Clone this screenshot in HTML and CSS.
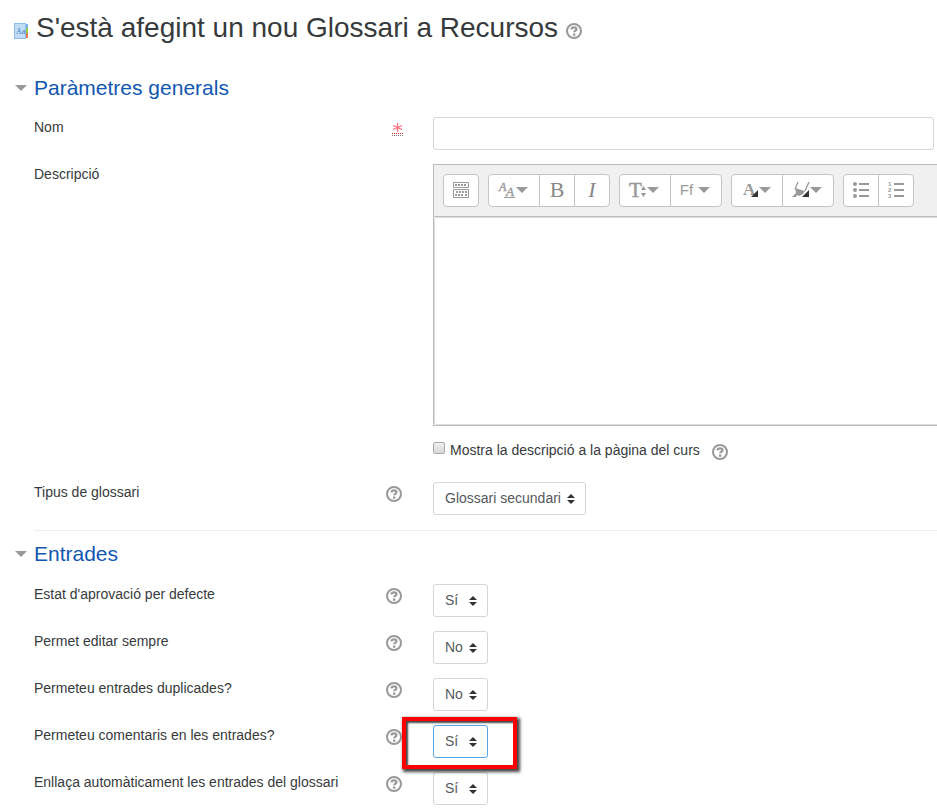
FILE: index.html
```
<!DOCTYPE html>
<html lang="ca">
<head>
    <meta charset="UTF-8">
    <meta name="viewport" content="width=device-width, initial-scale=1.0">
    <title>S'està afegint un nou Glossari a Recursos</title>
    <link rel="stylesheet" href="styles.css">
</head>
<body>
    <!-- Shared icons -->
    <svg class="sprite" aria-hidden="true">
        <symbol id="help" viewBox="0 0 16 16">
            <circle cx="8" cy="8" r="7" fill="none" stroke="#999" stroke-width="2"/>
            <path d="M5.4 6.3C5.6 4.8 6.7 4.3 8 4.3c1.5 0 2.5.7 2.5 1.9 0 1.6-2.3 1.5-2.3 3.1" fill="none" stroke="#999" stroke-width="2.2"/>
            <rect x="7" y="10.5" width="2.4" height="2.3" fill="#999"/>
        </symbol>
        <symbol id="caret" viewBox="0 0 12 6">
            <path d="M0 0h12L6 6z" fill="#999"/>
        </symbol>
    </svg>

    <div class="page">
        <h1 class="title">
            <svg class="title-icon" viewBox="0 0 15 16" aria-hidden="true">
                <rect x="11" y="1" width="3" height="4" fill="#7db4ec"/>
                <rect x="11" y="5" width="3" height="5" fill="#9acb3c"/>
                <rect x="11" y="10" width="3" height="5" fill="#ee7a4b"/>
                <rect x="0.5" y="0.5" width="11" height="15" fill="#c3ddf7" stroke="#8ebbe9"/>
                <text x="2" y="11" font-family="Liberation Serif, serif" font-size="8" fill="#3f7fc9">Aa</text>
            </svg>
            <span>S'està afegint un nou Glossari a Recursos</span>
            <a class="help" href="#" aria-label="Ajuda"><svg><use href="#help"/></svg></a>
        </h1>

        <form>
            <!-- General settings -->
            <section class="section">
                <h2 class="section-title"><a href="#"><svg class="caret"><use href="#caret"/></svg>Paràmetres generals</a></h2>

                <div class="row">
                    <label for="name">Nom</label>
                    <abbr class="required" title="Necessari">
                        <svg viewBox="0 0 11 9"><path d="M5.5 0v9M1 2.5l9 4M10 2.5l-9 4" fill="none" stroke="#ff6b78" stroke-width="1.2"/></svg>
                    </abbr>
                    <div class="field"><input class="text" type="text" id="name"></div>
                </div>

                <div class="row">
                    <label for="description">Descripció</label>
                    <div class="field">
                        <div class="editor">
                            <div class="toolbar">
                                <div class="group">
                                    <button type="button" aria-label="Mostra més botons">
                                        <svg width="16" height="16" viewBox="0 0 16 16">
                                            <g fill="none" stroke="#999">
                                                <path d="M.5.5h15v5H.5zM.5 7.5h15v8H.5z"/>
                                                <path d="M2 3h12M3 10h11M2 13h2M5 13h6M12 13h2" stroke-width="2" stroke-dasharray="2 1"/>
                                            </g>
                                        </svg>
                                    </button>
                                </div>
                                <div class="group">
                                    <button class="wide" type="button" aria-label="Estils de paràgraf">
                                        <svg width="18" height="20" viewBox="0 0 18 20">
                                            <g font-family="Liberation Serif, serif" font-style="italic" fill="#999" stroke="#999" stroke-width=".4">
                                                <text x="1" y="11" font-size="12">A</text>
                                                <text x="8" y="16" font-size="13">A</text>
                                            </g>
                                            <path d="M6 17.5h11" stroke="#999"/>
                                        </svg>
                                        <svg class="caret"><use href="#caret"/></svg>
                                    </button>
                                    <button class="bold" type="button" aria-label="Negreta">B</button>
                                    <button class="italic" type="button" aria-label="Cursiva">I</button>
                                </div>
                                <div class="group">
                                    <button class="wide" type="button" aria-label="Mida de la lletra">
                                        <svg width="18" height="20" viewBox="0 0 18 20">
                                            <text x="0" y="17" font-family="Liberation Serif, serif" font-size="21" fill="#999" stroke="#999" stroke-width=".5">T</text>
                                            <path d="M12 10l2.5-4 2.5 4zM12 13h5l-2.5 4z" fill="#999"/>
                                        </svg>
                                        <svg class="caret"><use href="#caret"/></svg>
                                    </button>
                                    <button class="wide font" type="button" aria-label="Tipus de lletra">Ff<svg class="caret"><use href="#caret"/></svg></button>
                                </div>
                                <div class="group">
                                    <button class="wide" type="button" aria-label="Color del text">
                                        <svg width="18" height="18" viewBox="0 0 18 18">
                                            <text x="2" y="14" font-family="Liberation Serif, serif" font-weight="bold" font-size="17" fill="#999">A</text>
                                            <path d="M17 9v7h-7z" fill="#333"/>
                                        </svg>
                                        <svg class="caret"><use href="#caret"/></svg>
                                    </button>
                                    <button class="wide" type="button" aria-label="Color de fons">
                                        <svg width="18" height="18" viewBox="0 0 18 18">
                                            <path d="M6 1L3 8M17 1l-4 9" fill="none" stroke="#999" stroke-width="1.3"/>
                                            <path d="M3 7l10 3-2 3-4 2-2-1-1 2H0l4-4z" fill="#999"/>
                                            <path d="M17 9v7h-7z" fill="#333"/>
                                        </svg>
                                        <svg class="caret"><use href="#caret"/></svg>
                                    </button>
                                </div>
                                <div class="group">
                                    <button type="button" aria-label="Llista no ordenada">
                                        <svg width="16" height="16" viewBox="0 0 16 16" fill="#999">
                                            <circle cx="2" cy="2" r="2"/><circle cx="2" cy="8" r="2"/><circle cx="2" cy="14" r="2"/>
                                            <path d="M6 1h10v2H6zM6 7h10v2H6zM6 13h10v2H6z"/>
                                        </svg>
                                    </button>
                                    <button type="button" aria-label="Llista ordenada">
                                        <svg width="16" height="16" viewBox="0 0 16 16" fill="#999">
                                            <g font-family="Liberation Sans, sans-serif" font-size="6" font-weight="bold">
                                                <text x="0" y="4">1</text><text x="0" y="10">2</text><text x="0" y="16">3</text>
                                            </g>
                                            <path d="M6 1h10v2H6zM6 7h10v2H6zM6 13h10v2H6z"/>
                                        </svg>
                                    </button>
                                </div>
                            </div>
                            <textarea class="content" id="description"></textarea>
                        </div>
                    </div>
                </div>

                <div class="row">
                    <div class="field check">
                        <input type="checkbox" id="show">
                        <label for="show">Mostra la descripció a la pàgina del curs</label>
                        <a class="help" href="#" aria-label="Ajuda"><svg><use href="#help"/></svg></a>
                    </div>
                </div>

                <div class="row">
                    <label for="type">Tipus de glossari</label>
                    <a class="help" href="#" aria-label="Ajuda"><svg><use href="#help"/></svg></a>
                    <div class="field">
                        <select id="type">
                            <option>Glossari secundari</option>
                            <option>Glossari principal</option>
                        </select>
                    </div>
                </div>
            </section>

            <!-- Entries -->
            <section class="section entries">
                <h2 class="section-title"><a href="#"><svg class="caret"><use href="#caret"/></svg>Entrades</a></h2>

                <div class="row">
                    <label for="approval">Estat d'aprovació per defecte</label>
                    <a class="help" href="#" aria-label="Ajuda"><svg><use href="#help"/></svg></a>
                    <div class="field">
                        <select id="approval"><option>No</option><option selected>Sí</option></select>
                    </div>
                </div>

                <div class="row">
                    <label for="edit">Permet editar sempre</label>
                    <a class="help" href="#" aria-label="Ajuda"><svg><use href="#help"/></svg></a>
                    <div class="field">
                        <select id="edit"><option selected>No</option><option>Sí</option></select>
                    </div>
                </div>

                <div class="row">
                    <label for="duplicates">Permeteu entrades duplicades?</label>
                    <a class="help" href="#" aria-label="Ajuda"><svg><use href="#help"/></svg></a>
                    <div class="field">
                        <select id="duplicates"><option selected>No</option><option>Sí</option></select>
                    </div>
                </div>

                <div class="row">
                    <label for="comments">Permeteu comentaris en les entrades?</label>
                    <a class="help" href="#" aria-label="Ajuda"><svg><use href="#help"/></svg></a>
                    <div class="field">
                        <div class="marked">
                            <select class="active" id="comments"><option>No</option><option selected>Sí</option></select>
                        </div>
                    </div>
                </div>

                <div class="row">
                    <label for="autolink">Enllaça automàticament les entrades del glossari</label>
                    <a class="help" href="#" aria-label="Ajuda"><svg><use href="#help"/></svg></a>
                    <div class="field">
                        <select id="autolink"><option>No</option><option selected>Sí</option></select>
                    </div>
                </div>
            </section>
        </form>
    </div>
</body>
</html>
```
FILE: styles.css
```
* {
    box-sizing: border-box;
}

body {
    margin: 0;
    background: #fff;
    color: #373a3c;
    font-family: "Liberation Sans", Arial, sans-serif;
    font-size: 14px;
    line-height: 20px;
    overflow-x: hidden;
}

.sprite {
    display: none;
}

svg {
    display: block;
    flex: none;
    overflow: visible;
}

.page {
    padding: 11px 0 0 14px;
}

.title {
    display: flex;
    align-items: center;
    margin: 0 0 30px;
    font-size: 28px;
    font-weight: normal;
    line-height: 34px;
}

.title-icon {
    width: 15px;
    height: 16px;
    margin: 5px 7px 0 0;
}

.title .help {
    margin: 5px 0 0 8px;
}

.help,
.help svg {
    display: block;
    width: 16px;
    height: 16px;
}

.caret {
    width: 12px;
    height: 6px;
}

.section {
    display: grid;
    gap: 14px;
    margin-left: 20px;
}

.entries {
    margin-top: 15px;
    padding-top: 10px;
    border-top: 1px solid #eee;
}

.section-title {
    margin: 0 0 2px -19px;
    font-size: 21px;
    font-weight: normal;
    line-height: 26px;
}

.entries .section-title {
    margin-bottom: 3px;
}

.section-title a {
    display: flex;
    align-items: center;
    gap: 7px;
    color: #1157b0;
    text-decoration: none;
}

.row {
    display: grid;
    grid-template-columns: 352px 47px minmax(0, 1fr);
    align-items: start;
}

.row > .help {
    margin-top: 4px;
}

.required {
    width: 11px;
    margin: 6px 0 0 6px;
    padding-bottom: 1px;
    border-bottom: 1px dotted #777;
    text-decoration: none;
}

.required svg {
    width: 11px;
    height: 11px;
    padding-bottom: 1px;
    border-bottom: 1px dotted #d22;
}

.field {
    grid-column: 3;
    padding-right: 3px;
}

.text {
    display: block;
    width: 100%;
    height: 33px;
    padding: 6px 10px;
    border: 1px solid #d5d5d5;
    border-radius: 3px;
    font: inherit;
}

/* Editor runs past the right edge of the form */
.editor {
    margin-right: -20px;
    border: 1px solid #bbb;
}

.toolbar {
    display: flex;
    gap: 9px;
    padding: 9px;
    border-bottom: 1px solid #bbb;
    background: #f0f0f0;
}

.group {
    display: flex;
    height: 33px;
    border: 1px solid #c4c4c4;
    border-radius: 4px;
    background: #fff;
}

.group button {
    display: flex;
    align-items: center;
    justify-content: center;
    width: 34px;
    padding: 0 0 2px;
    border: 0;
    background: none;
    color: #999;
    font-family: inherit;
    font-size: 14px;
    cursor: pointer;
}

.group button + button {
    width: 35px;
    border-left: 1px solid #c4c4c4;
}

.group .wide {
    width: 50px;
    padding-right: 2px;
}

.group button + .wide {
    width: 51px;
}

.group .font {
    gap: 5px;
    font-size: 15px;
}

.group .bold,
.group .italic {
    color: #888;
    font-family: "Liberation Serif", serif;
    font-size: 22px;
}

.group .italic {
    font-style: italic;
}

.content {
    display: block;
    width: 100%;
    height: 208px;
    padding: 6px;
    border: 1px solid #ddd;
    border-radius: 3px;
    font: inherit;
    resize: none;
}

.check {
    display: flex;
    align-items: flex-start;
    height: 28px;
}

.check input {
    appearance: none;
    width: 12px;
    height: 12px;
    margin: 2px 5px 0 0;
    border: 1px solid #aaa;
    border-radius: 2px;
    background: linear-gradient(#eee, #d8d8d8);
}

.check .help {
    margin: 4px 0 0 12px;
}

select {
    display: block;
    appearance: none;
    height: 33px;
    padding: 0 24px 2px 11px;
    border: 1px solid #d5d5d5;
    border-radius: 3px;
    background: #fff url("data:image/svg+xml,%3Csvg xmlns='http://www.w3.org/2000/svg' viewBox='0 0 8 10'%3E%3Cpath fill='%23333' d='M0 4l4-4 4 4zM0 6h8l-4 4z'/%3E%3C/svg%3E") no-repeat right 10px center;
    background-size: 8px 10px;
    color: #55595c;
    font: inherit;
}

.entries select {
    width: 55px;
}

.entries .active {
    border-color: #55a5e8;
}

/* Red frame around the highlighted option */
.marked {
    position: relative;
    width: 55px;
}

.marked::after {
    content: "";
    position: absolute;
    top: -8px;
    right: -29px;
    bottom: -11px;
    left: -31px;
    border: 4px solid #f00;
    box-shadow: 2px 2px 3px 1px #444, inset 2px 2px 2px #444;
    pointer-events: none;
}
```
